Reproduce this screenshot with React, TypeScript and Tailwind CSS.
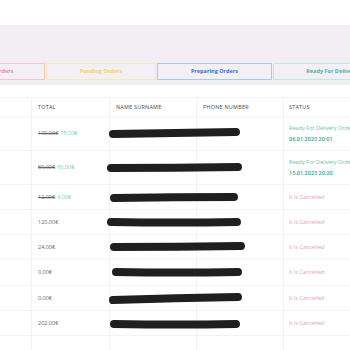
import React from 'react';

type Row = {
  old?: string;
  total: string;
  status: 'ready' | 'cancelled';
  date?: string;
  h: string;
};

const rows: Row[] = [
  { old: '100,00€', total: '75,00€', status: 'ready', date: '06.01.2023 20:01', h: 'h-[34px]' },
  { old: '80,00€', total: '60,00€', status: 'ready', date: '15.01.2023 20:20', h: 'h-[34px]' },
  { old: '12,00€', total: '6,00€', status: 'cancelled', h: 'h-[25px]' },
  { total: '120,00€', status: 'cancelled', h: 'h-[25px]' },
  { total: '24,00€', status: 'cancelled', h: 'h-[25px]' },
  { total: '0,00€', status: 'cancelled', h: 'h-[26px]' },
  { total: '0,00€', status: 'cancelled', h: 'h-[25px]' },
  { total: '202,00€', status: 'cancelled', h: 'h-[25px]' },
  { total: '', status: 'ready', h: 'h-[34px]' },
];

// redaction scribbles over the name / phone columns
const scribbles = [
  'M113 134 Q175 133 236 132',
  'M111 168 Q175 168 238 167',
  'M114 198 Q175 197 234 197',
  'M111 222 Q175 223 237 222',
  'M114 247 Q178 247 241 246',
  'M116 272 Q178 273 238 272',
  'M113 300 Q176 298 238 297',
  'M114 324 Q176 325 236 324',
];

const tabs = [
  { label: 'Cancelled Orders', cls: 'border-[#f1c3d3] text-[#e98aac] w-[110px] -ml-[65px]' },
  { label: 'Pending Orders', cls: 'border-[#f6e7b6] text-[#f1d461] w-[110px]' },
  { label: 'Preparing Orders', cls: 'border-[#abc8e5] text-[#3d74bc] w-[115px]' },
  { label: 'Ready For Delivery Orders', cls: 'border-[#c2e6e0] text-[#45b5a4] w-[138px]' },
];

export default function App() {
  return (
    <div
      className="relative w-[350px] h-[350px] overflow-hidden bg-white"
      style={{ fontFamily: '"Open Sans", "Liberation Sans", sans-serif' }}
    >
      <div className="h-[25px]" />
      {/* status tabs band */}
      <div className="h-[60px] bg-[#f3eef4] flex items-end pb-[5px]">
        <div className="flex gap-[1px] whitespace-nowrap">
          {tabs.map((t) => (
            <div
              key={t.label}
              className={`shrink-0 h-[17px] border flex items-center justify-center text-[5.5px] font-bold bg-[#f2eff5] ${t.cls}`}
            >
              {t.label}
            </div>
          ))}
        </div>
      </div>
      <div className="h-[12px]" />

      {/* orders table */}
      <div className="text-[5.5px] text-[#555]">
        <div className="grid grid-cols-[32px_78px_87px_87px_1fr] h-[20px] border-y border-[#f3f3f3] items-center uppercase tracking-[0.2px] text-[#4a4a4a]">
          <div className="h-full border-r border-[#f3f3f3]" />
          <div className="pl-[6px] h-full flex items-center border-r border-[#f3f3f3]">Total</div>
          <div className="pl-[6px] h-full flex items-center border-r border-[#f3f3f3]">Name Surname</div>
          <div className="pl-[6px] h-full flex items-center border-r border-[#f3f3f3]">Phone Number</div>
          <div className="pl-[5px] h-full flex items-center">Status</div>
        </div>
        {rows.map((r, i) => (
          <div
            key={i}
            className={`grid grid-cols-[32px_78px_87px_87px_1fr] border-b border-[#f3f3f3] ${r.h}`}
          >
            <div className="border-r border-[#f3f3f3]" />
            <div className="pl-[6px] flex items-center gap-[2px] border-r border-[#f3f3f3]">
              {r.old && <span className="line-through text-[#666]">{r.old}</span>}
              <span className={r.old ? 'text-[#6cc9b9]' : 'text-[#666]'}>{r.total}</span>
            </div>
            <div className="border-r border-[#f3f3f3]" />
            <div className="border-r border-[#f3f3f3]" />
            <div className="pl-[5px] flex flex-col justify-center whitespace-nowrap leading-[11px]">
              {r.status === 'ready' ? (
                <>
                  <span className="text-[#62c3b3]">Ready For Delivery Orders</span>
                  {r.date && <span className="text-[#2fa493] font-semibold">{r.date}</span>}
                </>
              ) : (
                <span className="text-[#e2a0b7]">It Is Cancelled</span>
              )}
            </div>
          </div>
        ))}
      </div>

      <svg className="absolute inset-0 pointer-events-none" width="350" height="350">
        {scribbles.map((d, i) => (
          <path key={i} d={d} stroke="#1f1f1f" strokeWidth="8" strokeLinecap="round" fill="none" />
        ))}
      </svg>
    </div>
  );
}
